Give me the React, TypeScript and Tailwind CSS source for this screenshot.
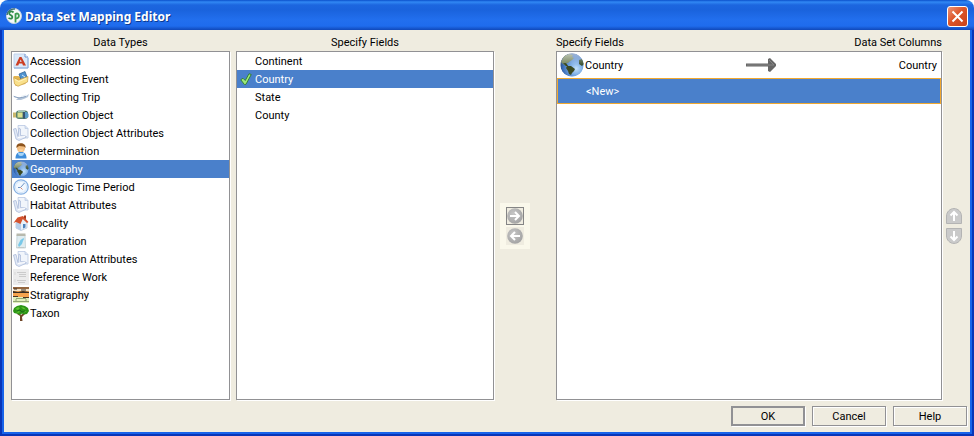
import { useState } from 'react';
import type { ReactNode } from 'react';

function Svg({ children, className = 'size-4' }: { children: ReactNode; className?: string }) {
  return (
    <svg viewBox="0 0 16 16" className={`${className} shrink-0`} aria-hidden="true">
      {children}
    </svg>
  );
}

function Globe({ className = 'size-4' }: { className?: string }) {
  return (
    <svg viewBox="0 0 24 24" className={`${className} shrink-0`} aria-hidden="true">
      <defs>
        <radialGradient id="sea" cx="0.68" cy="0.65" r="0.8">
          <stop offset="0" stopColor="#c3e2fb" />
          <stop offset="0.35" stopColor="#7aabe4" />
          <stop offset="0.7" stopColor="#3a6db8" />
          <stop offset="1" stopColor="#17335f" />
        </radialGradient>
        <linearGradient id="haze" x1="0" y1="0" x2="0" y2="1">
          <stop offset="0" stopColor="#fff" stopOpacity="0.55" />
          <stop offset="0.5" stopColor="#fff" stopOpacity="0" />
        </linearGradient>
        <clipPath id="ball">
          <circle cx="12" cy="12" r="11.7" />
        </clipPath>
      </defs>
      <g clipPath="url(#ball)">
        <circle cx="12" cy="12" r="11.7" fill="url(#sea)" />
        <path d="M1 9 L4 3 L9 1 L13 2 L12 4 L14 5 L12 7 L9 9 L8 10 L6 10 L8 13 L6 13 L3 11Z" fill="#71825a" />
        <path d="M3 10 L6 10 L8 13 L6 13Z" fill="#33451f" />
        <path d="M7 13 L11 13 L15 16 L14 18 L12 20 L11 22 L9 21 L8 18 L6 15Z" fill="#3c4a23" />
        <path d="M19 7 L22 6 L24 11 L22 13 L19 11Z" fill="#39502f" />
        <circle cx="12" cy="12" r="11.7" fill="url(#haze)" />
      </g>
    </svg>
  );
}

const accession = (
  <Svg>
    <path d="M1 1h11l3 3v11H1z" fill="#dbe8f8" stroke="#c0d2ec" />
    <path d="M12 1v3h3" fill="#fff" stroke="#6d94cf" />
    <path
      d="M2.500 12.500 6.500 4h2l4.500 8.500h-3L9.200 10.500H6L5.300 12.500z M6.700 8.800h2L7.700 6.500z"
      fill="#cc3d22"
      fillRule="evenodd"
    />
    <path d="M1 15h14V5" fill="none" stroke="#86a9da" />
  </Svg>
);

const collectingEvent = (
  <Svg>
    <path d="M.5 5h5l1 1h6v7l-10 2z" fill="#e3b550" />
    <path d="M6 3 12 .5 14 6 8 9z" fill="#4f93cf" stroke="#2c5c8c" strokeWidth=".7" />
    <path d="m9 4 3 2" stroke="#cfe8ff" />
    <path d="M.5 6.500 5.500 9 15 5.500 14.500 11 5 15.300 1.500 13z" fill="#f9e08a" stroke="#c99d48" strokeWidth=".7" />
    <path d="m2 8.500 4 2 7-3" fill="none" stroke="#fff3bd" />
  </Svg>
);

const collectingTrip = (
  <Svg>
    <path d="M0 6.500 3 8l5 .5 5-1.500 3-2-1 3-3 1.500-4 1.500H3l2-2-4-1z" fill="#b5c6da" />
    <path d="m1 7.500 5 1.500 7-1.500" fill="none" stroke="#8ba2bf" />
    <path d="m8 7.500 5-1.500" stroke="#e6eef6" />
  </Svg>
);

const collectionObject = (
  <Svg>
    <path d="M0 5.500h4v5H0z" fill="#c9b86f" />
    <rect x="3" y="3.500" width="12" height="8.500" rx="3" fill="#55806f" />
    <rect x="4.500" y="5.500" width="5" height="5" fill="#d9df8e" />
    <path d="M10 4.500h2v7h-2z" fill="#37536f" />
    <path d="M12 5h2l1.500 2v3L14 11h-2z" fill="#5a9cc8" />
    <path d="M5 4.500h7" stroke="#9dc6b4" />
  </Svg>
);

const attributes = (
  <Svg>
    <path d="M5 .5h7l3 3v9.500H6z" fill="#f1f5fb" stroke="#b9c8e2" strokeWidth=".8" />
    <path d="M12 .5v3h3" fill="#d6e1f1" stroke="#b9c8e2" strokeWidth=".7" />
    <path d="m.5 4 2.500-.5 2 8 1-8.500 1.500 1v6.500l5 .5 1 1L6 15.500 3 14z" fill="#e2e9f6" stroke="#a3b4d6" strokeWidth=".7" />
    <path d="m5 12.500 7-1" fill="none" stroke="#fff" />
  </Svg>
);

const determination = (
  <Svg>
    <path d="M2.500 15.500c0-4 1.500-6.500 5.500-6.500s5.500 2.500 5.500 6.500z" fill="#3f8edb" />
    <path d="M5 10c0 2 1 3 3 3s3-1 3-3" fill="#a8d6f8" />
    <circle cx="8" cy="5.200" r="3.900" fill="#f3bf82" />
    <path d="M3.500 5C3 1.500 5.500.3 8 .3s5 1.500 4.500 4.700L11 3.500 6 3z" fill="#8d541d" />
    <path d="M6 6.500c0 2.500 4 2.500 4 0" fill="#fbd7a4" />
  </Svg>
);

const clock = (
  <Svg>
    <circle cx="8" cy="8" r="7.200" fill="#f2f8ff" stroke="#86b0e3" strokeWidth="1.300" />
    <circle cx="8" cy="8" r="5.600" fill="none" stroke="#d5e6f8" />
    <path d="m11.500 4-4 4.500H5" fill="none" stroke="#6d92c4" />
    <path d="m7.500 8.500 2 2" stroke="#d98a74" />
  </Svg>
);

const house = (
  <Svg>
    <path d="M3 8v5l5 2.500 6-2.500V7L10 3z" fill="#e8f0f9" stroke="#9db3d0" strokeWidth=".6" />
    <path d="M3 8v5l5 2.500V9L6 5z" fill="#b9cfe9" />
    <path d="M.5 8 4.500 2.500 10 1l5.500 6-1.500 1L9.800 4 7.500 9 3 7z" fill="#d4532e" />
    <path d="M11 .5h2v4l-2-2z" fill="#a33b20" />
    <path d="M10 9h2.500v3.500L10 13.500z" fill="#4c83be" />
  </Svg>
);

const jar = (
  <Svg>
    <path d="M4 2h8l.500 13h-9z" fill="#dfecf0" stroke="#b7c9cd" strokeWidth=".7" />
    <path d="M3.500.5h9v2.500h-9z" fill="#b8b9ad" />
    <path d="m10.500 5-3 2-2.500 5 1 2 3-3 1-3 1-2z" fill="#79c8e8" />
    <path d="M4.500 14.500h7" stroke="#c1c9c8" />
  </Svg>
);

const reference = (
  <Svg>
    <rect width="16" height="16" fill="#ececec" />
    <path d="M4 3.500h9M6 5.500h7M6 7.500h7M4 11.500h9M5 13.500h7" stroke="#cbcbcb" />
    <path d="M2 3v3M2 10v3" stroke="#d8d8d8" />
  </Svg>
);

const strata = (
  <Svg>
    <path d="M0 0h16v16H0z" fill="#f5a34e" />
    <path d="M0 0h16v2H0z" fill="#94663e" />
    <path d="M0 2h16v2H0z" fill="#f4e3c6" />
    <path d="m0 4 5 1 5-1 6 1v1H0z" fill="#362c24" />
    <path d="M1 2h3M8 3h5" stroke="#3b3028" />
    <path d="M0 10h16v6H0z" fill="#e1f0bd" />
    <path d="M3 11.500h10M0 14.500h16M3 12v2M13 12v2" stroke="#7d9362" strokeWidth=".8" />
    <path d="M0 9.500h5M10 10.500h6" stroke="#493322" />
  </Svg>
);

const tree = (
  <Svg>
    <path d="m4 9 3 2v5h2.500l-.5-4 4-4-1-1-4 3-3-2z" fill="#704628" />
    <path d="M1 8 0 6l1-3 3-2 4-1 4 1 3 2 1 3-2 3-3 .5L9 8.500 7 10 5 9z" fill="#2c9416" />
    <path d="m2 4 3-2 2 1-2 2zm6-2 3 .5 2 2-3-.5zM3 7l3-1 1 1-2 1zm7-1 4 .5-3 1z" fill="#5cc52f" />
    <path d="m4 6 3-1 2 2 3-1" fill="none" stroke="#14631a" strokeWidth=".8" />
  </Svg>
);

const dataTypes: { name: string; icon: ReactNode }[] = [
  { name: 'Accession', icon: accession },
  { name: 'Collecting Event', icon: collectingEvent },
  { name: 'Collecting Trip', icon: collectingTrip },
  { name: 'Collection Object', icon: collectionObject },
  { name: 'Collection Object Attributes', icon: attributes },
  { name: 'Determination', icon: determination },
  { name: 'Geography', icon: <Globe /> },
  { name: 'Geologic Time Period', icon: clock },
  { name: 'Habitat Attributes', icon: attributes },
  { name: 'Locality', icon: house },
  { name: 'Preparation', icon: jar },
  { name: 'Preparation Attributes', icon: attributes },
  { name: 'Reference Work', icon: reference },
  { name: 'Stratigraphy', icon: strata },
  { name: 'Taxon', icon: tree },
];

const fields = ['Continent', 'Country', 'State', 'County'];

const panel = 'flex-1 border border-[#919194] bg-white shadow-[1px_1px_0_#ffffff]';
const row = 'flex h-[18px] w-full items-center text-left whitespace-nowrap';
const selectedRow = 'bg-[#4a80cb] text-white';
const label = 'pt-[2px]';

function Check() {
  return (
    <Svg className="size-3">
      <path d="m1 9 3-2 3 3 5-9 3 1-7 13-2 .5z" fill="#9be87a" stroke="#2f7a2c" strokeWidth="1.200" />
    </Svg>
  );
}

function RoundArrow({ left = false }: { left?: boolean }) {
  return (
    <Svg>
      <defs>
        <radialGradient id="disc" cx="0.4" cy="0.35" r="0.7">
          <stop offset="0" stopColor="#c6c6c6" />
          <stop offset="1" stopColor="#a2a2a2" />
        </radialGradient>
      </defs>
      <circle cx="8" cy="8" r="7.800" fill="url(#disc)" />
      <path d={left ? 'M13 8H4M8 4 4 8l4 4' : 'M3 8h9M8 4l4 4-4 4'} fill="none" stroke="#fff" strokeWidth="2" />
    </Svg>
  );
}

function OrderArrow({ down = false }: { down?: boolean }) {
  return (
    <Svg>
      <path
        d={down ? 'M.5.5h15V8c0 4-3.500 7.500-7.500 7.500S.5 12 .5 8z' : 'M.5 15.500h15V8c0-4-3.500-7.500-7.500-7.500S.5 4 .5 8z'}
        fill="#cacaca"
        stroke="#b4b4b4"
      />
      <path d={down ? 'M8 3v9M4.500 8.500 8 12l3.500-3.500' : 'M8 13V4M4.500 7.500 8 4l3.500 3.500'} fill="none" stroke="#fff" strokeWidth="2" />
    </Svg>
  );
}

function DialogButton({ text, primary = false }: { text: string; primary?: boolean }) {
  return (
    <button
      type="button"
      className={`flex h-5 w-[74px] items-center justify-center border-[#919194] ${
        primary
          ? 'border-2 shadow-[1px_1px_0_#ffffff]'
          : 'border shadow-[inset_1px_1px_0_#ffffff,1px_1px_0_#ffffff]'
      }`}
    >
      <span className={label}>{text}</span>
    </button>
  );
}

export default function App() {
  const [type, setType] = useState('Geography');
  const [field, setField] = useState('Country');
  const [mapping, setMapping] = useState('new');

  return (
    <div className="flex min-h-screen flex-col bg-white font-['Roboto','Noto_Sans',sans-serif] text-[11px] leading-[14px] text-black">
      <header className="flex h-[30px] shrink-0 items-center gap-[3px] rounded-t-lg bg-[linear-gradient(to_bottom,#0b50cb_0px,#3188f4_2px,#1c66df_5px,#1a63dd_10px,#226fee_20px,#1f6ced_26px,#1048b9_30px)] pt-[2px] pr-[6px] pl-[6px]">
        <svg viewBox="0 0 16 16" className="size-4 shrink-0" aria-hidden="true">
          <circle cx="8" cy="8" r="7.500" fill="#f4f8f8" stroke="#c3d3e2" />
          <path d="M1 7a7 7 0 0 1 8-6" fill="none" stroke="#3e6f78" strokeWidth="1.500" />
          <path d="M7.500 4.500C4.500 1.500 1.500 5.500 4.500 7s2 5-2 3" fill="none" stroke="#2f8a4a" strokeWidth="1.800" />
          <path d="M9.500 14.500V6c4-2.500 5 5 0 4.500" fill="none" stroke="#3a9b50" strokeWidth="1.800" />
        </svg>
        <h1 className="flex-1 pt-[2px] font-['Noto_Sans','Open_Sans',sans-serif] text-[12px] font-bold text-white [text-shadow:1px_1px_0_#0b3a91]">
          Data Set Mapping Editor
        </h1>
        <button
          type="button"
          aria-label="Close"
          className="flex size-[21px] items-center justify-center rounded-[3px] border border-white bg-[linear-gradient(135deg,#ec9478,#dd5529_45%,#c8421a)]"
        >
          <svg viewBox="0 0 13 13" className="size-[13px]" aria-hidden="true">
            <path d="m1.500 1.500 10 10m0-10-10 10" stroke="#fff" strokeWidth="2" />
          </svg>
        </button>
      </header>

      <div className="flex flex-1 flex-col border-x-2 border-b-2 border-[#0835b8]">
        <div className="flex flex-1 flex-col border-x-2 border-b-2 border-[#1763ea] bg-[#efece0]">
          <main className="flex flex-1 pt-[6px] pr-2 pl-[7px]">
            <section className="flex min-w-[180px] grow-[219] basis-0 flex-col">
              <h2 className="mb-px text-center">Data Types</h2>
              <ul className={panel}>
                {dataTypes.map(({ name, icon }) => (
                  <li key={name}>
                    <button
                      type="button"
                      aria-pressed={type === name}
                      onClick={() => setType(name)}
                      className={`${row} gap-px pl-px ${type === name ? selectedRow : ''}`}
                    >
                      {icon}
                      <span className={label}>{name}</span>
                    </button>
                  </li>
                ))}
              </ul>
            </section>

            <section className="ml-[6px] flex min-w-[140px] grow-[258] basis-0 flex-col">
              <h2 className="mb-px text-center">Specify Fields</h2>
              <ul className={panel}>
                {fields.map((name) => (
                  <li key={name}>
                    <button
                      type="button"
                      aria-pressed={field === name}
                      onClick={() => setField(name)}
                      className={`${row} gap-[3px] pl-[3px] ${field === name ? selectedRow : ''}`}
                    >
                      <span className="flex w-3 shrink-0">{name === 'Country' && <Check />}</span>
                      <span className={label}>{name}</span>
                    </button>
                  </li>
                ))}
              </ul>
            </section>

            <div className="mx-[6px] mt-4 flex w-[30px] shrink-0 flex-col items-center justify-center gap-[2px] self-center bg-[#faf8eb] py-1">
              <button
                type="button"
                aria-label="Map field"
                className="flex size-[18px] items-center justify-center border border-[#858585] bg-[#efece0]"
              >
                <RoundArrow />
              </button>
              <button type="button" aria-label="Unmap field" className="flex size-[18px] items-center justify-center bg-[#efece0]">
                <RoundArrow left />
              </button>
            </div>

            <section className="ml-5 flex min-w-[220px] grow-[386] basis-0 flex-col">
              <div className="mb-px flex justify-between">
                <h2>Specify Fields</h2>
                <h2>Data Set Columns</h2>
              </div>
              <ul className={panel}>
                <li>
                  <button
                    type="button"
                    aria-pressed={mapping === 'country'}
                    onClick={() => setMapping('country')}
                    className={`flex h-[26px] w-full items-center gap-px pr-1 pl-[3px] ${mapping === 'country' ? selectedRow : ''}`}
                  >
                    <Globe className="size-6" />
                    <span className={`${label} flex-1 text-left`}>Country</span>
                    <svg viewBox="0 0 30 14" className="h-[14px] w-[30px]" aria-hidden="true">
                      <path d="M0 5.500h22V1l2-1 6 6v2l-6 6-2-1V8.500H0z" fill="#666666" />
                      <path d="m23 2 5 5H1" fill="none" stroke="#858585" />
                    </svg>
                    <span className={`${label} flex-1 text-right`}>Country</span>
                  </button>
                </li>
                <li>
                  <button
                    type="button"
                    aria-pressed={mapping === 'new'}
                    onClick={() => setMapping('new')}
                    className={`flex h-[26px] w-full items-center border pl-7 ${
                      mapping === 'new' ? 'border-[#f0a830] bg-[#4a80cb] text-white' : 'border-transparent'
                    }`}
                  >
                    <span className={label}>{'<New>'}</span>
                  </button>
                </li>
              </ul>
            </section>

            <div className="mt-4 ml-1 flex shrink-0 flex-col justify-center gap-1">
              <button type="button" aria-label="Move up">
                <OrderArrow />
              </button>
              <button type="button" aria-label="Move down">
                <OrderArrow down />
              </button>
            </div>
          </main>

          <footer className="flex justify-end gap-[7px] pt-[6px] pr-[3px] pb-[6px]">
            <DialogButton text="OK" primary />
            <DialogButton text="Cancel" />
            <DialogButton text="Help" />
          </footer>
        </div>
      </div>
    </div>
  );
}
